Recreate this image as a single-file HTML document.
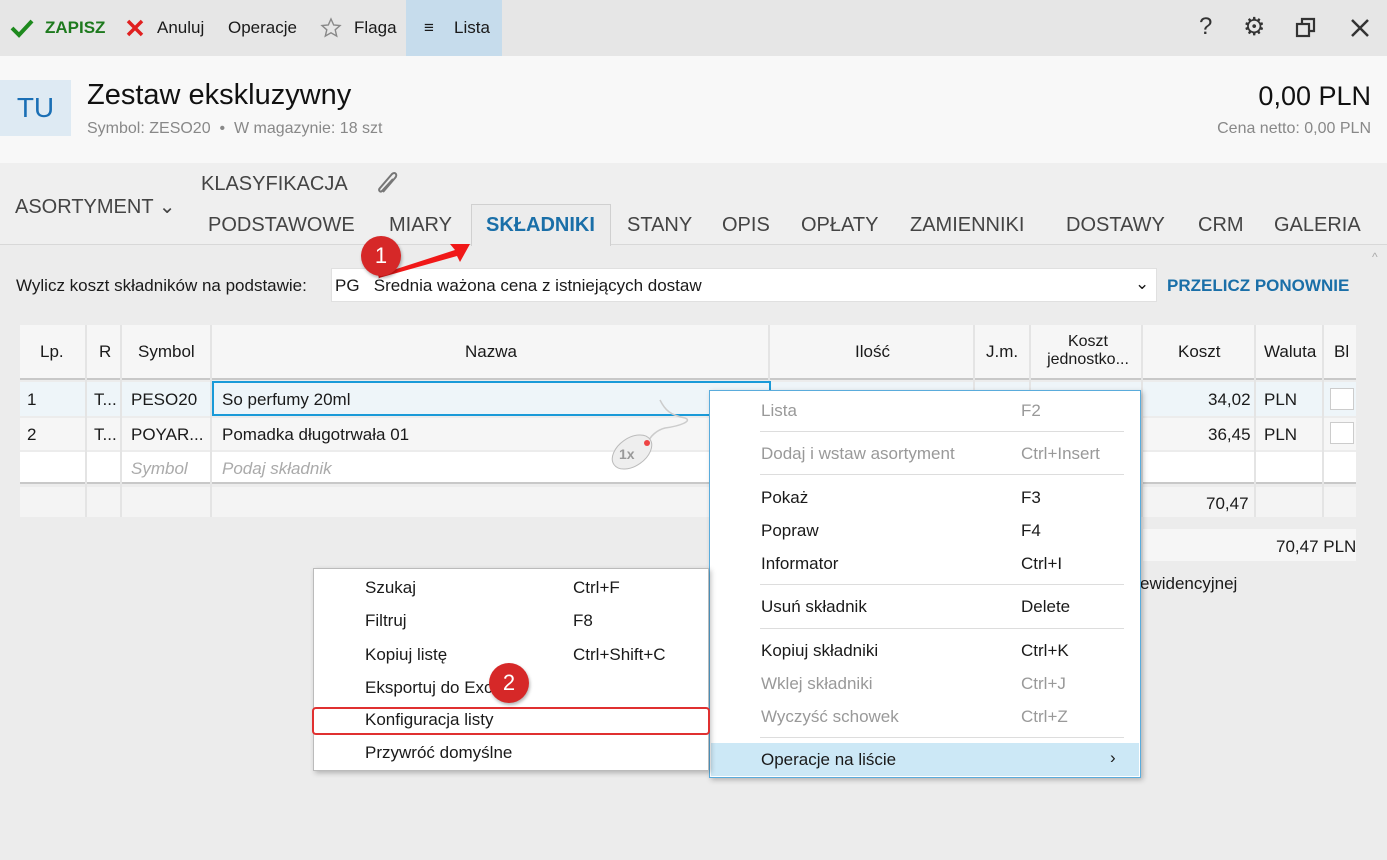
<!DOCTYPE html>
<html><head><meta charset="utf-8"><style>
*{margin:0;padding:0;box-sizing:border-box}
body{width:1387px;height:860px;background:#ececec;font-family:"Segoe UI","Liberation Sans",sans-serif;font-size:17px;color:#1a1a1a;position:relative;overflow:hidden}
.a{position:absolute;white-space:nowrap}
.tb{top:0;left:0;width:1387px;height:56px;background:#e6e6e6}
.hd{top:56px;left:0;width:1387px;height:107px;background:#f8f8f8}
.tab{font-size:20px;color:#444;top:214px}
.c{position:absolute;border-right:2px solid #e4e4e4}
.m{position:absolute;background:#fff;border:1px solid #bbb;box-shadow:2px 2px 5px rgba(0,0,0,.25)}
.mi{position:absolute;font-size:17px}
.g{color:#999}
.sep{position:absolute;height:1px;background:#ddd}
</style></head><body>
<div class="a tb"></div>
<div class="a" style="left:406px;top:0;width:96px;height:56px;background:#c6dcec"></div>
<svg class="a" style="left:10px;top:18px" width="24" height="20"><path d="M2 10l7 7L22 3" stroke="#1e8a1e" stroke-width="4" fill="none"/></svg>
<div class="a" style="left:45px;top:18px;color:#1e7a1e;font-weight:bold">ZAPISZ</div>
<svg class="a" style="left:126px;top:19px" width="18" height="18"><path d="M2 2l14 14M16 2L2 16" stroke="#e02020" stroke-width="3.5"/></svg>
<div class="a" style="left:157px;top:18px">Anuluj</div>
<div class="a" style="left:228px;top:18px">Operacje</div>
<svg class="a" style="left:320px;top:17px" width="22" height="22"><path d="M11 2l2.7 6 6.3.6-4.8 4.2 1.5 6.3L11 15.8 5.3 19.1l1.5-6.3L2 8.6l6.3-.6z" fill="none" stroke="#888" stroke-width="1.4"/></svg>
<div class="a" style="left:354px;top:18px">Flaga</div>
<div class="a" style="left:424px;top:18px">≡</div>
<div class="a" style="left:454px;top:18px">Lista</div>
<div class="a" style="left:1199px;top:13px;font-size:24px;color:#333">?</div>
<div class="a" style="left:1243px;top:12px;font-size:25px;color:#333">⚙</div>
<svg class="a" style="left:1295px;top:17px" width="22" height="22"><rect x="2" y="7" width="12" height="12" fill="none" stroke="#333" stroke-width="2.2"/><path d="M7 7V2h12v12h-5" fill="none" stroke="#333" stroke-width="2.2"/></svg>
<svg class="a" style="left:1350px;top:18px" width="20" height="20"><path d="M2 2l16 16M18 2L2 18" stroke="#333" stroke-width="2.5"/></svg>
<div class="a hd"></div>
<div class="a" style="left:0;top:80px;width:71px;height:56px;background:#deeaf3;color:#1a6fb5;font-size:28px;text-align:center;line-height:56px">TU</div>
<div class="a" style="left:87px;top:79px;font-size:29px;color:#111">Zestaw ekskluzywny</div>
<div class="a" style="left:87px;top:120px;font-size:16px;color:#888">Symbol: ZESO20 &nbsp;•&nbsp; W magazynie: 18 szt</div>
<div class="a" style="right:16px;top:81px;font-size:27px;color:#111">0,00 PLN</div>
<div class="a" style="right:16px;top:120px;font-size:16px;color:#888">Cena netto: 0,00 PLN</div>
<div class="a" style="left:0;top:163px;width:1387px;height:82px;background:#efefef;border-bottom:1px solid #d8d8d8"></div>
<div class="a tab" style="left:15px;top:194px">ASORTYMENT ⌄</div>
<div class="a tab" style="left:201px;top:173px">KLASYFIKACJA</div>
<svg class="a" style="left:375px;top:170px" width="26" height="26"><path d="M8 22L20 8c3-3 0-7-3-4L5 18c-2 2 0 5 2 3l11-12" fill="none" stroke="#777" stroke-width="2"/></svg>
<div class="a tab" style="left:208px">PODSTAWOWE</div>
<div class="a tab" style="left:389px">MIARY</div>
<div class="a" style="left:471px;top:204px;width:140px;height:42px;background:#ececec;border:1px solid #d0d0d0;border-bottom:none"></div>
<div class="a tab" style="left:486px;color:#1a6fa8;font-weight:bold">SKŁADNIKI</div>
<div class="a tab" style="left:627px">STANY</div>
<div class="a tab" style="left:722px">OPIS</div>
<div class="a tab" style="left:801px">OPŁATY</div>
<div class="a tab" style="left:910px">ZAMIENNIKI</div>
<div class="a tab" style="left:1066px">DOSTAWY</div>
<div class="a tab" style="left:1198px">CRM</div>
<div class="a tab" style="left:1274px">GALERIA</div>
<div class="a" style="left:16px;top:276px">Wylicz koszt składników na podstawie:</div>
<div class="a" style="left:331px;top:268px;width:826px;height:34px;background:#fff;border:1px solid #e0e0e0"></div>
<div class="a" style="left:335px;top:276px">PG &nbsp;&nbsp;Średnia ważona cena z istniejących dostaw</div>
<div class="a" style="left:1135px;top:274px">⌄</div>
<div class="a" style="left:1167px;top:276px;color:#1a6fa8;font-weight:bold">PRZELICZ PONOWNIE</div>
<div class="a" style="left:20px;top:325px;width:1336px;height:55px;background:#f6f6f6;border-bottom:2px solid #c8c8c8"></div>
<div class="a" style="left:20px;top:382px;width:1336px;height:34px;background:#eef5f9"></div>
<div class="a" style="left:20px;top:418px;width:1336px;height:32px;background:#f6f6f6"></div>
<div class="a" style="left:20px;top:452px;width:1336px;height:32px;background:#fff;border-bottom:2px solid #c8c8c8"></div>
<div class="a" style="left:20px;top:487px;width:1336px;height:30px;background:#f4f4f4"></div>
<div class="c" style="left:20px;top:325px;width:67px;height:192px"></div>
<div class="c" style="left:87px;top:325px;width:35px;height:192px"></div>
<div class="c" style="left:122px;top:325px;width:90px;height:192px"></div>
<div class="c" style="left:212px;top:325px;width:558px;height:192px"></div>
<div class="c" style="left:770px;top:325px;width:205px;height:192px"></div>
<div class="c" style="left:975px;top:325px;width:56px;height:192px"></div>
<div class="c" style="left:1031px;top:325px;width:112px;height:192px"></div>
<div class="c" style="left:1143px;top:325px;width:113px;height:192px"></div>
<div class="c" style="left:1256px;top:325px;width:68px;height:192px"></div>
<div class="a" style="left:212px;top:381px;width:559px;height:35px;border:2px solid #1a9ad8;background:#eef5f9"></div>
<div class="a" style="left:40px;top:342px">Lp.</div><div class="a" style="left:99px;top:342px">R</div><div class="a" style="left:138px;top:342px">Symbol</div>
<div class="a" style="left:465px;top:342px">Nazwa</div><div class="a" style="left:855px;top:342px">Ilość</div><div class="a" style="left:986px;top:342px">J.m.</div>
<div class="a" style="left:1040px;top:333px;font-size:16px;line-height:18px;text-align:center;width:96px">Koszt<br>jednostko...</div>
<div class="a" style="left:1178px;top:342px">Koszt</div><div class="a" style="left:1264px;top:342px;width:54px;overflow:hidden">Waluta</div><div class="a" style="left:1334px;top:342px">Bl</div>
<div class="a" style="left:27px;top:390px">1</div><div class="a" style="left:94px;top:390px">T...</div><div class="a" style="left:131px;top:390px">PESO20</div><div class="a" style="left:222px;top:390px">So perfumy 20ml</div>
<div class="a" style="left:1208px;top:390px">34,02</div><div class="a" style="left:1264px;top:390px">PLN</div>
<div class="a" style="left:1330px;top:388px;width:24px;height:22px;background:#fff;border:1px solid #ccc"></div>
<div class="a" style="left:27px;top:425px">2</div><div class="a" style="left:94px;top:425px">T...</div><div class="a" style="left:131px;top:425px">POYAR...</div><div class="a" style="left:222px;top:425px">Pomadka długotrwała 01</div>
<div class="a" style="left:1208px;top:425px">36,45</div><div class="a" style="left:1264px;top:425px">PLN</div>
<div class="a" style="left:1330px;top:422px;width:24px;height:22px;background:#fff;border:1px solid #ccc"></div>
<div class="a" style="left:131px;top:459px;color:#aaa;font-style:italic">Symbol</div><div class="a" style="left:222px;top:459px;color:#aaa;font-style:italic">Podaj składnik</div>
<div class="a" style="left:1206px;top:494px">70,47</div>
<div class="a" style="left:1143px;top:529px;width:213px;height:32px;background:#f6f6f6"></div>
<div class="a" style="left:1276px;top:537px">70,47 PLN</div>
<div class="a" style="left:1140px;top:574px">ewidencyjnej</div>
<svg class="a" style="left:605px;top:395px" width="90" height="80"><path d="M55 5c5 10 10 15 25 18c8 3-5 8-20 10-8 2-15 8-18 16" stroke="#ccc" fill="none" stroke-width="1.5"/><ellipse cx="27" cy="57" rx="22" ry="14" transform="rotate(-35 27 57)" fill="#eee" stroke="#bbb"/><circle cx="42" cy="48" r="3" fill="#e44"/><text x="14" y="64" font-size="14" font-weight="bold" fill="#999" font-family="Liberation Sans">1x</text></svg>
<div class="m" style="left:709px;top:390px;width:432px;height:388px;border-color:#5aacdc"></div>
<div class="mi g" style="left:761px;top:401px">Lista</div><div class="mi g" style="left:1021px;top:401px">F2</div>
<div class="sep" style="left:760px;top:431px;width:364px"></div>
<div class="mi g" style="left:761px;top:444px">Dodaj i wstaw asortyment</div><div class="mi g" style="left:1021px;top:444px">Ctrl+Insert</div>
<div class="sep" style="left:760px;top:474px;width:364px"></div>
<div class="mi" style="left:761px;top:488px">Pokaż</div><div class="mi" style="left:1021px;top:488px">F3</div>
<div class="mi" style="left:761px;top:521px">Popraw</div><div class="mi" style="left:1021px;top:521px">F4</div>
<div class="mi" style="left:761px;top:554px">Informator</div><div class="mi" style="left:1021px;top:554px">Ctrl+I</div>
<div class="sep" style="left:760px;top:584px;width:364px"></div>
<div class="mi" style="left:761px;top:597px">Usuń składnik</div><div class="mi" style="left:1021px;top:597px">Delete</div>
<div class="sep" style="left:760px;top:628px;width:364px"></div>
<div class="mi" style="left:761px;top:641px">Kopiuj składniki</div><div class="mi" style="left:1021px;top:641px">Ctrl+K</div>
<div class="mi g" style="left:761px;top:674px">Wklej składniki</div><div class="mi g" style="left:1021px;top:674px">Ctrl+J</div>
<div class="mi g" style="left:761px;top:707px">Wyczyść schowek</div><div class="mi g" style="left:1021px;top:707px">Ctrl+Z</div>
<div class="sep" style="left:760px;top:737px;width:364px"></div>
<div class="a" style="left:711px;top:743px;width:428px;height:33px;background:#cce8f6"></div>
<div class="mi" style="left:761px;top:750px">Operacje na liście</div><div class="mi" style="left:1110px;top:748px">›</div>
<div class="m" style="left:313px;top:568px;width:396px;height:203px"></div>
<div class="mi" style="left:365px;top:578px">Szukaj</div><div class="mi" style="left:573px;top:578px">Ctrl+F</div>
<div class="mi" style="left:365px;top:611px">Filtruj</div><div class="mi" style="left:573px;top:611px">F8</div>
<div class="mi" style="left:365px;top:645px">Kopiuj listę</div><div class="mi" style="left:573px;top:645px">Ctrl+Shift+C</div>
<div class="mi" style="left:365px;top:678px">Eksportuj do Excela</div>
<div class="a" style="left:312px;top:707px;width:398px;height:28px;border:2px solid #e03030;border-radius:4px"></div>
<div class="mi" style="left:365px;top:710px">Konfiguracja listy</div>
<div class="mi" style="left:365px;top:743px">Przywróć domyślne</div>
<svg class="a" style="left:230px;top:235px" width="250" height="50"><path d="M148 40L225 15l-5-6 20 0-10 18-3-6-78 22z" fill="#f01818"/></svg>
<div class="a" style="left:361px;top:236px;width:40px;height:40px;border-radius:50%;background:#d62828;color:#fff;font-size:22px;text-align:center;line-height:40px;box-shadow:1px 2px 3px rgba(0,0,0,.3)">1</div>
<div class="a" style="left:489px;top:663px;width:40px;height:40px;border-radius:50%;background:#d62828;color:#fff;font-size:22px;text-align:center;line-height:40px;box-shadow:1px 2px 3px rgba(0,0,0,.3)">2</div>
<div class="a" style="left:1372px;top:250px;color:#aaa;font-size:12px">^</div>
</body></html>
